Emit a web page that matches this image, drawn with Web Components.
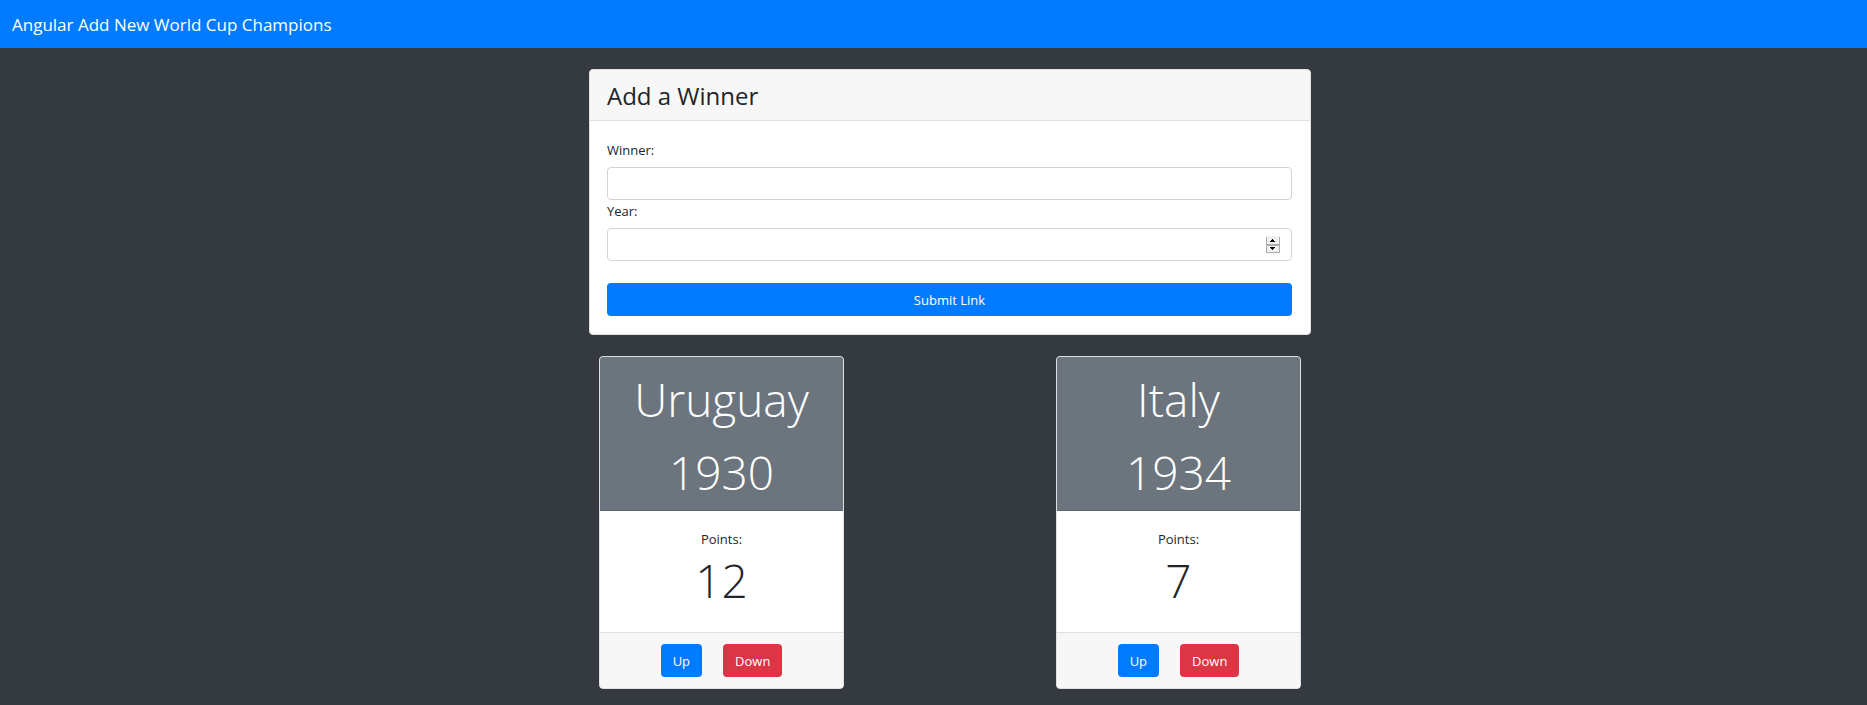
<!DOCTYPE html>
<html lang="en">
<head>
<meta charset="utf-8">
<meta name="viewport" content="width=device-width, initial-scale=1">
<title>World Cup Champions</title>
<style>
  body { margin: 0; background: #343a40; color: #212529; font: 14px/21px "Open Sans", "Noto Sans", sans-serif; }
</style>
</head>
<body>
<champions-app></champions-app>
<script>
const define = (name, html) => customElements.define(name, class extends HTMLElement {
  constructor() {
    super();
    this.attachShadow({ mode: 'open' }).innerHTML = '<style>*{box-sizing:border-box}</style>' + html;
  }
});

define('app-navbar', `
<style>
  :host { display: block; background: #007bff; padding: 13px 12px 11px; }
  a { display: block; color: #fff; text-decoration: none; font-size: 17px; line-height: 24px; }
</style>
<a href="#"><slot></slot></a>`);

define('action-button', `
<style>
  :host { display: block; }
  button { width: 100%; height: 33px; padding: 1px 12px 0; border: 0; border-radius: 4px; background: #007bff; color: #fff; font: inherit; font-size: 13px; line-height: 32px; }
  :host([kind="danger"]) button { background: #dc3545; }
</style>
<button type="button"><slot></slot></button>`);

define('winner-form', `
<style>
  :host { display: block; background: #fff; border: 1px solid #dfdfdf; border-radius: 4px; overflow: hidden; }
  header { padding: 11px 17px 9px; background: #f7f7f7; border-bottom: 1px solid #dfdfdf; }
  h2 { margin: 0; font-size: 24px; line-height: 30px; font-weight: 400; }
  form { padding: 18px 18px 18px 17px; }
  label { display: block; padding: 1px 0 6px; font-size: 13px; }
  input { display: block; width: 100%; height: 33px; padding: 0 12px; border: 1px solid #ced4da; border-radius: 4px; background: #fff; color: inherit; font: inherit; appearance: none; }
  input[type=number] { appearance: textfield; }
  .number { position: relative; margin-bottom: 22px; }
  svg { position: absolute; right: 12px; top: 8px; }
</style>
<header><h2>Add a Winner</h2></header>
<form>
  <label for="winner">Winner:</label>
  <input id="winner" type="text">
  <label for="year">Year:</label>
  <div class="number">
    <input id="year" type="number">
    <svg width="14" height="17" viewBox="0 0 14 17" shape-rendering="crispEdges" aria-hidden="true">
      <path fill="#f0f0f0" d="M0 0h14v17H0z"/>
      <path fill="#acacac" d="M0 1h1v16H0zM13 1h1v16h-1zM0 8h14v2H0zM0 16h14v1H0z"/>
      <path fill="#000" d="M6 3h1v1H6zM5 4h3v1H5zM4 5h5v1H4zM4 11h5v1H4zM5 12h3v1H5zM6 13h1v1H6z"/>
    </svg>
  </div>
  <action-button>Submit Link</action-button>
</form>`);

define('winner-card', `
<style>
  :host { display: block; background: #fff; border: 1px solid #dfdfdf; border-radius: 4px; overflow: hidden; text-align: center; }
  header { display: grid; gap: 13px; padding: 12px 10px 8px; background: #6c757d; border-bottom: 1px solid #5e666d; color: #fff; }
  h2, p { margin: 0; }
  .display { font-size: 46px; line-height: 60px; font-weight: 300; }
  .body { padding: 18px 18px 22px; font-size: 13px; }
  footer { display: flex; justify-content: center; gap: 21px; padding: 11px; background: #f7f7f7; border-top: 1px solid #dfdfdf; }
</style>
<header>
  <h2 class="display"><slot name="country"></slot></h2>
  <p class="display"><slot name="year"></slot></p>
</header>
<div class="body">
  <p>Points:</p>
  <p class="display"><slot name="points"></slot></p>
</div>
<footer>
  <action-button>Up</action-button>
  <action-button kind="danger">Down</action-button>
</footer>`);

define('champions-app', `
<style>
  :host { display: block; }
  main { display: grid; gap: 21px; max-width: 755px; margin: 0 auto; padding: 21px 0 15px 33px; }
  .winners { display: flex; flex-wrap: wrap; justify-content: space-between; gap: 21px; padding: 0 10px; }
  winner-card { flex: 0 1 245px; }
</style>
<app-navbar>Angular Add New World Cup Champions</app-navbar>
<main>
  <winner-form></winner-form>
  <section class="winners">
    <winner-card><span slot="country">Uruguay</span><span slot="year">1930</span><span slot="points">12</span></winner-card>
    <winner-card><span slot="country">Italy</span><span slot="year">1934</span><span slot="points">7</span></winner-card>
  </section>
</main>`);
</script>
</body>
</html>
